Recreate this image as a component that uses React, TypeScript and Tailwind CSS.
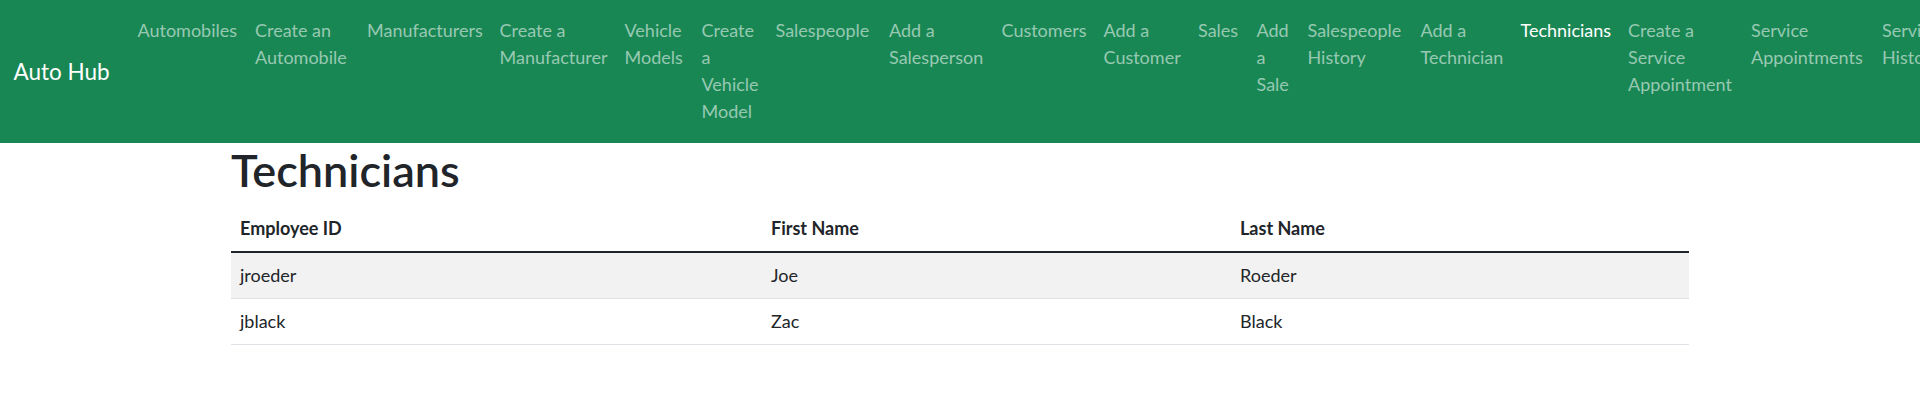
// Auto Hub - technicians list page
type NavLink = {
  lines: string[];
  width: string;
  active?: boolean;
};

const navLinks: NavLink[] = [
  { lines: ["Automobiles"], width: "w-[117.5px]" },
  { lines: ["Create an", "Automobile"], width: "w-[112px]" },
  { lines: ["Manufacturers"], width: "w-[132.5px]" },
  { lines: ["Create a", "Manufacturer"], width: "w-[125px]" },
  { lines: ["Vehicle", "Models"], width: "w-[77px]" },
  { lines: ["Create", "a", "Vehicle", "Model"], width: "w-[74px]" },
  { lines: ["Salespeople"], width: "w-[113.5px]" },
  { lines: ["Add a", "Salesperson"], width: "w-[112.5px]" },
  { lines: ["Customers"], width: "w-[102px]" },
  { lines: ["Add a", "Customer"], width: "w-[94.5px]" },
  { lines: ["Sales"], width: "w-[58.5px]" },
  { lines: ["Add", "a", "Sale"], width: "w-[51px]" },
  { lines: ["Salespeople", "History"], width: "w-[113px]" },
  { lines: ["Add a", "Technician"], width: "w-[100px]" },
  { lines: ["Technicians"], width: "w-[107.5px]", active: true },
  { lines: ["Create a", "Service", "Appointment"], width: "w-[123px]" },
  { lines: ["Service", "Appointments"], width: "w-[131px]" },
  { lines: ["Service", "History"], width: "w-[120px]" },
];

const technicians = [
  { employeeId: "jroeder", firstName: "Joe", lastName: "Roeder" },
  { employeeId: "jblack", firstName: "Zac", lastName: "Black" },
];

function Navbar() {
  return (
    <nav className="bg-[#198754] pt-[8px] pb-[9px] overflow-hidden">
      <div className="flex items-center px-[13.5px]">
        {/* Brand */}
        <a className="shrink-0 w-[97px] mr-[18px] pt-[2px] text-[22.5px] leading-[34px] text-white whitespace-nowrap">
          Auto Hub
        </a>

        {/* Links */}
        <ul className="flex items-start">
          {navLinks.map((link) => (
            <li
              key={link.lines.join(" ")}
              className={`shrink-0 px-[9px] py-[9px] text-[18px] leading-[27px] ${link.width} ${
                link.active ? "text-white" : "text-[#97c9b2]"
              }`}
            >
              {link.lines.map((line) => (
                <div key={line} className="whitespace-nowrap">
                  {line}
                </div>
              ))}
            </li>
          ))}
        </ul>
      </div>
    </nav>
  );
}

function TechnicianList() {
  return (
    <div className="max-w-[1485px] mx-auto px-[13.5px]">
      <h1 className="text-[45px] leading-[54px] font-semibold text-[#212529] mb-[9px]">
        Technicians
      </h1>
      <table className="w-full border-collapse text-[18px] leading-[27px] text-[#212529] mb-[18px]">
        <thead>
          <tr className="border-b-2 border-[#212529]">
            <th className="w-[531px] p-[9px] text-left font-bold">Employee ID</th>
            <th className="w-[469px] p-[9px] text-left font-bold">First Name</th>
            <th className="p-[9px] text-left font-bold">Last Name</th>
          </tr>
        </thead>
        <tbody>
          {technicians.map((tech, i) => (
            <tr
              key={tech.employeeId}
              className={`border-b border-[#dee2e6] ${i % 2 === 0 ? "bg-[#f2f2f2]" : "bg-white"}`}
            >
              <td className="p-[9px]">{tech.employeeId}</td>
              <td className="p-[9px]">{tech.firstName}</td>
              <td className="p-[9px]">{tech.lastName}</td>
            </tr>
          ))}
        </tbody>
      </table>
    </div>
  );
}

function App() {
  return (
    <div className="min-h-screen bg-white font-['Lato',sans-serif]">
      <Navbar />
      <main>
        <TechnicianList />
      </main>
    </div>
  );
}

export default App;
